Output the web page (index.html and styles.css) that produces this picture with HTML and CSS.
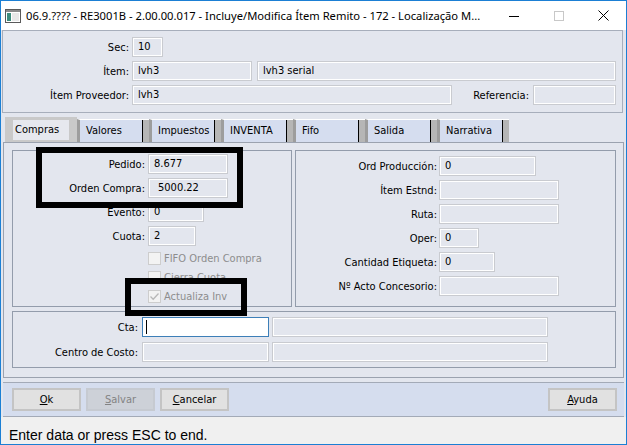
FILE: index.html
```html
<!DOCTYPE html>
<html>
<head>
<meta charset="utf-8">
<link rel="stylesheet" href="styles.css">
</head>
<body>
<div class="window">
  <div class="titlebar">
    <svg class="app-icon" width="16" height="16" viewBox="0 0 16 16">
      <rect x="0.5" y="1.5" width="15" height="13" fill="#ffffff" stroke="#5a5a5a"/>
      <rect x="1" y="2" width="14" height="2" fill="#8a8a8a"/>
      <rect x="2" y="5" width="4" height="8" fill="#3c8c7c"/>
      <rect x="7" y="5" width="7" height="8" fill="#e8e8e8"/>
    </svg>
    <span class="title">06.9.???? - RE3001B - 2.00.00.017 - Incluye/Modifica Ítem Remito - 172 - Localização M...</span>
    <div class="controls">
      <span class="ctl"><svg width="10" height="10" viewBox="0 0 10 10"><path d="M0 5.5H10" stroke="#000" stroke-width="1"/></svg></span>
      <span class="ctl"><svg width="10" height="10" viewBox="0 0 10 10"><rect x="0.5" y="0.5" width="9" height="9" fill="none" stroke="#c8c8c8"/></svg></span>
      <span class="ctl"><svg width="11" height="11" viewBox="0 0 11 11"><path d="M0.5 0.5L10.5 10.5M10.5 0.5L0.5 10.5" stroke="#000" stroke-width="1"/></svg></span>
    </div>
  </div>

  <div class="client">
    <div class="header-panel">
      <div class="row">
        <span class="lbl hdr-lbl">Sec:</span>
        <span class="fld w30">10</span>
      </div>
      <div class="row">
        <span class="lbl hdr-lbl">Ítem:</span>
        <span class="fld w119">lvh3</span>
        <span class="fld w358 ml6">lvh3 serial</span>
      </div>
      <div class="row">
        <span class="lbl hdr-lbl">Ítem Proveedor:</span>
        <span class="fld w319">lvh3</span>
        <span class="lbl grow">Referencia:</span>
        <span class="fld w83"></span>
      </div>
    </div>

    <div class="tabs">
      <span class="tab active"><span class="tab-inner">Compras</span></span>
      <span class="tab">Valores</span>
      <span class="tab">Impuestos</span>
      <span class="tab">INVENTA</span>
      <span class="tab">Fifo</span>
      <span class="tab">Salida</span>
      <span class="tab">Narrativa</span>
    </div>

    <div class="tab-panel">
      <div class="groups">
        <div class="group group-left">
          <div class="row">
            <span class="lbl gl-lbl">Pedido:</span>
            <span class="fld w79">8.677</span>
          </div>
          <div class="row">
            <span class="lbl gl-lbl">Orden Compra:</span>
            <span class="fld w79 pad-more">5000.22</span>
          </div>
          <div class="row">
            <span class="lbl gl-lbl">Evento:</span>
            <span class="fld w55">0</span>
          </div>
          <div class="row">
            <span class="lbl gl-lbl">Cuota:</span>
            <span class="fld w47">2</span>
          </div>
          <div class="checks">
            <div class="check"><span class="box"></span><span class="check-lbl">FIFO Orden Compra</span></div>
            <div class="check"><span class="box"></span><span class="check-lbl">Cierra Cuota</span></div>
            <div class="check"><span class="box"><svg width="11" height="11" viewBox="0 0 11 11"><path d="M1.5 5.5L4.2 8.3L9.5 2.5" fill="none" stroke="#b8b8b8" stroke-width="1.3"/></svg></span><span class="check-lbl">Actualiza Inv</span></div>
          </div>
        </div>
        <div class="group group-right">
          <div class="row">
            <span class="lbl gr-lbl">Ord Producción:</span>
            <span class="fld w96">0</span>
          </div>
          <div class="row">
            <span class="lbl gr-lbl">Ítem Estnd:</span>
            <span class="fld w119"></span>
          </div>
          <div class="row">
            <span class="lbl gr-lbl">Ruta:</span>
            <span class="fld w119"></span>
          </div>
          <div class="row">
            <span class="lbl gr-lbl">Oper:</span>
            <span class="fld w39">0</span>
          </div>
          <div class="row">
            <span class="lbl gr-lbl">Cantidad Etiqueta:</span>
            <span class="fld w55">0</span>
          </div>
          <div class="row">
            <span class="lbl gr-lbl">Nº Acto Concesorio:</span>
            <span class="fld w119"></span>
          </div>
        </div>
      </div>
      <div class="group group-bottom">
        <div class="row">
          <span class="lbl gb-lbl">Cta:</span>
          <span class="fld w126 focus"><span class="caret"></span></span>
          <span class="fld w275 ml4"></span>
        </div>
        <div class="row">
          <span class="lbl gb-lbl">Centro de Costo:</span>
          <span class="fld w126"></span>
          <span class="fld w275 ml4"></span>
        </div>
      </div>
    </div>

    <div class="button-bar">
      <button class="btn"><u>O</u>k</button>
      <button class="btn disabled"><u>S</u>alvar</button>
      <button class="btn"><u>C</u>ancelar</button>
      <span class="spacer"></span>
      <button class="btn"><u>A</u>yuda</button>
    </div>

    <div class="status">Enter data or press ESC to end.</div>
  </div>

  <div class="mark mark1"></div>
  <div class="mark mark2"></div>
</div>
</body>
</html>
```

FILE: styles.css
```css
* { box-sizing: border-box; }

body {
  margin: 0;
  font-family: "DejaVu Sans Condensed", "DejaVu Sans", sans-serif;
  font-size: 11px;
  color: #000;
  background: #fff;
}

.window {
  position: relative;
  width: 627px;
  height: 445px;
  border: 1px solid #1b7fd4;
  background: #e3e6ee;
  display: flex;
  flex-direction: column;
}

/* ---------- title bar ---------- */
.titlebar {
  height: 29px;
  flex: none;
  background: #fff;
  display: flex;
  align-items: center;
}
.app-icon { margin-left: 4px; flex: none; }
.title {
  margin-left: 5px;
  flex: 1;
  min-width: 0;
  font-family: "Noto Sans", sans-serif;
  font-size: 11.2px;
  white-space: nowrap;
}
.controls { display: flex; flex: none; }
.ctl {
  width: 45px;
  height: 29px;
  display: flex;
  align-items: center;
  justify-content: center;
}

/* ---------- client ---------- */
.client {
  flex: 1;
  display: flex;
  flex-direction: column;
  background: #e3e6ee;
}

.row { display: flex; align-items: center; height: 20px; }

.lbl {
  text-align: right;
  white-space: nowrap;
  flex: none;
}
.grow { flex: 1; padding-right: 4px; }

.fld {
  height: 20px;
  flex: none;
  border: 1px solid #c9cbd0;
  box-shadow: inset 0 0 0 1px #ffffff;
  background: #e3e6ee;
  padding: 0 5px;
  line-height: 18px;
  white-space: nowrap;
  overflow: hidden;
}
.pad-more { padding-left: 9px; }
.focus {
  background: #fff;
  border-color: #3d7fb8;
  box-shadow: none;
  display: flex;
  align-items: center;
  padding-left: 3px;
}
.caret { width: 1px; height: 14px; background: #000; }

.w30 { width: 31px; }
.w39 { width: 40px; }
.w47 { width: 48px; }
.w55 { width: 56px; }
.w79 { width: 80px; }
.w83 { width: 83px; }
.w96 { width: 97px; }
.w119 { width: 120px; }
.w126 { width: 127px; }
.w275 { width: 276px; }
.w319 { width: 320px; }
.w358 { width: 359px; }
.ml6 { margin-left: 5px; }
.ml4 { margin-left: 3px; }

/* ---------- header panel ---------- */
.header-panel {
  margin: 0 3px 0 1px;
  height: 83px;
  flex: none;
  border: 1px solid #a7aebb;
  padding: 6px 6px 0 0;
  display: flex;
  flex-direction: column;
  gap: 4px;
}
.hdr-lbl { width: 126px; margin-right: 3px; }

/* ---------- tabs ---------- */
.tabs {
  margin: 4px 0 0 4px;
  height: 25px;
  flex: none;
  display: flex;
  align-items: flex-end;
}
.tab {
  width: 72px;
  height: 23px;
  background: #d5ddef;
  border-top: 1px solid #fff;
  border-left: 3px solid #9d9d9d;
  box-shadow: inset -6px 0 0 #b6b6b6, inset -7px 0 0 #000;
  padding-left: 6px;
  line-height: 21px;
}
.tab.active {
  height: 25px;
  background: #c9c9c9;
  border: none;
  box-shadow: none;
  padding: 3px 8px 2px 8px;
  line-height: 20px;
}
.tab-inner {
  display: block;
  height: 20px;
  background: #e6e8ee;
  padding-left: 2px;
}

/* ---------- tab panel ---------- */
.tab-panel {
  margin: 0 2px 0 2px;
  height: 236px;
  flex: none;
  border: 1px solid #9ba2af;
  padding: 7px 7px 0 8px;
  display: flex;
  flex-direction: column;
  gap: 4px;
}
.groups { display: flex; gap: 3px; height: 157px; }
.group {
  border: 1px solid #939cab;
  display: flex;
  flex-direction: column;
}
.group-left { width: 280px; padding-top: 3px; gap: 4px; }
.group-right { flex: 1; padding-top: 5px; gap: 4px; }
.group-bottom { height: 57px; padding-top: 5px; gap: 5px; }

.gl-lbl { width: 132px; margin-right: 3px; }
.gr-lbl { width: 141px; margin-right: 2px; }
.gb-lbl { width: 125px; margin-right: 4px; }

.checks { display: flex; flex-direction: column; padding-left: 135px; margin-top: -1px; }
.check { display: flex; align-items: center; height: 19px; color: #8d8d8d; }
.box {
  width: 13px;
  height: 13px;
  border: 1px solid #cdcdcd;
  background: #f3f3f3;
  margin-right: 3px;
  display: flex;
  align-items: center;
  justify-content: center;
}

/* ---------- button bar ---------- */
.button-bar {
  margin: 4px 2px 0 2px;
  height: 35px;
  flex: none;
  background: #d5ddee;
  border-top: 1px solid #a3aab7;
  border-bottom: 1px solid #a3aab7;
  display: flex;
  align-items: center;
  padding: 0 7px 0 9px;
  gap: 4px;
}
.spacer { flex: 1; }
.btn {
  width: 69px;
  height: 23px;
  font-family: inherit;
  font-size: 11px;
  color: #000;
  background: #e1e1e1;
  border: 2px solid #c4c4c4;
  padding: 0;
}
.btn.disabled { background: #cdd1d8; color: #838383; border-color: #c6cad1; }
.btn + .btn { margin-left: 1px; }

/* ---------- status ---------- */
.status {
  flex: 1;
  background: #f0f0f0;
  font-family: "Liberation Sans", Arial, sans-serif;
  font-size: 14px;
  padding: 10px 0 0 8px;
}

/* ---------- annotation marks ---------- */
.mark {
  position: absolute;
  border: 6px solid #000;
}
.mark1 { left: 35px; top: 146px; width: 207px; height: 61px; }
.mark2 { left: 124px; top: 277px; width: 122px; height: 38px; }
```
